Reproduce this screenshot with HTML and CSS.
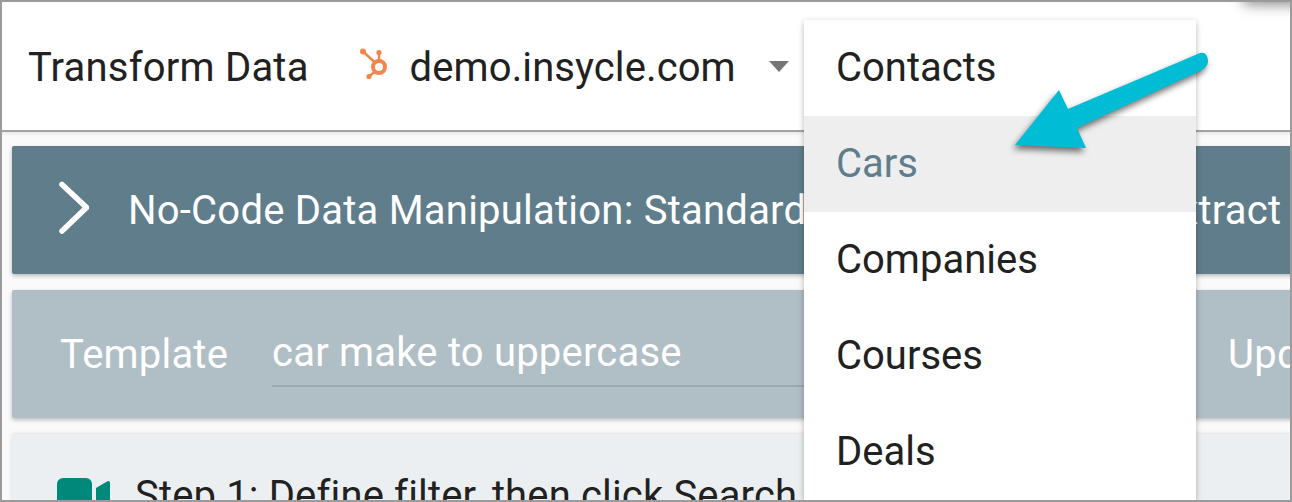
FILE: index.html
```html
<!DOCTYPE html>
<html lang="en">
<head>
<meta charset="utf-8">
<title>Transform Data</title>
<link rel="stylesheet" href="styles.css">
</head>
<body>
<div class="frame">
  <span class="corner-shadow"></span>
  <header class="topbar">
    <h1 class="title">Transform Data</h1>
    <svg class="hubspot" width="34" height="40" viewBox="0 0 34 40" aria-hidden="true">
      <g fill="none" stroke="#f5844a">
        <circle cx="20" cy="22" r="6" stroke-width="4"/>
        <path d="M4 6.5 16 17.5M20 8V15M10.5 31 16 26.5" stroke-width="2.4"/>
      </g>
      <g fill="#f5844a">
        <circle cx="4" cy="6.5" r="3"/>
        <circle cx="20" cy="7.5" r="2.6"/>
        <circle cx="10" cy="31.5" r="2.6"/>
      </g>
    </svg>
    <span class="account">demo.insycle.com</span>
    <span class="caret"></span>
  </header>
  <main class="content">
    <section class="panel panel-title">
      <svg class="chevron" width="30" height="56" viewBox="0 0 30 56" aria-hidden="true">
        <path d="M3 4.5 27.5 27.5 3 51" fill="none" stroke="#fff" stroke-width="5.5" stroke-linecap="round"/>
      </svg>
      <span class="panel-text">No-Code Data Manipulation: Standardize, Format, Match, Extract</span>
    </section>
    <section class="panel panel-template">
      <span class="template-label">Template</span>
      <span class="template-input">car make to uppercase</span>
      <span class="template-action">Update</span>
    </section>
    <section class="panel panel-step">
      <svg class="video" width="54" height="40" viewBox="0 0 54 40" aria-hidden="true">
        <rect x="0" y="0" width="35" height="40" rx="6" fill="#00897b"/>
        <path d="M39 10 50 3.5Q53 2 53 5V40H39Z" fill="#00897b"/>
      </svg>
      <span class="step-text">Step 1: Define filter, then click Search</span>
    </section>
  </main>
  <ul class="menu">
    <li class="menu-item">Contacts</li>
    <li class="menu-item menu-item-active">Cars</li>
    <li class="menu-item">Companies</li>
    <li class="menu-item">Courses</li>
    <li class="menu-item">Deals</li>
  </ul>
  <svg class="arrow" width="220" height="120" viewBox="1005 40 220 120" aria-hidden="true">
    <path d="M1199 53.5C1204 51 1208 55 1208 61 1208 66 1204 69 1200 71L1077 128 1086 148 1015 145 1059 90 1068 109Z" fill="#00bcd4"/>
  </svg>
</div>
</body>
</html>
```
FILE: styles.css
```css
* { box-sizing: border-box; }
html, body { margin: 0; padding: 0; }
body { font-family: Roboto, "Liberation Sans", sans-serif; background: #fff; }

.frame {
  position: relative;
  width: 1292px;
  height: 502px;
  border: 2px solid #9b9b9b;
  background: #fafafa;
  overflow: hidden;
}
.corner-shadow {
  position: absolute;
  top: -14px;
  right: -20px;
  width: 68px;
  height: 14px;
  border-radius: 10px;
  box-shadow: 0 2px 14px rgba(0, 0, 0, .5);
}
.topbar {
  display: flex;
  align-items: center;
  height: 130px;
  padding: 0 0 0 26px;
  background: #fff;
  border-bottom: 2px solid #a3a3a3;
  box-shadow: 0 2px 4px rgba(0, 0, 0, .08);
}
.title {
  margin: 2px 0 0;
  font-size: 40px;
  font-weight: 400;
  color: #212121;
  letter-spacing: .2px;
}
.hubspot { margin-left: 50px; margin-top: -3px; }
.account {
  margin: 2px 0 0 17px;
  font-size: 40px;
  color: #212121;
  letter-spacing: .1px;
}
.caret {
  width: 0;
  height: 0;
  margin-left: 33px;
  border-left: 10.5px solid transparent;
  border-right: 10.5px solid transparent;
  border-top: 11px solid #757575;
}
.content {
  display: flex;
  flex-direction: column;
  gap: 16px;
  padding: 14px 0 0 10px;
}
.panel {
  display: flex;
  align-items: center;
  flex: none;
  height: 128px;
  margin-right: -10px;
  border-radius: 2px;
  white-space: nowrap;
  overflow: hidden;
  box-shadow: 0 2px 4px rgba(0, 0, 0, .25);
}
.panel-title { background: #607d8b; color: #fff; padding-left: 47px; }
.chevron { flex: none; margin-top: -4px; }
.panel-text { margin-left: 39px; font-size: 40px; letter-spacing: .23px; }
.panel-template { background: #b0bec5; color: #fff; padding-left: 48px; }
.template-label { font-size: 40px; letter-spacing: .2px; }
.template-input {
  flex: none;
  width: 600px;
  margin: 7px 0 0 44px;
  padding-bottom: 9px;
  font-size: 40px;
  letter-spacing: .2px;
  border-bottom: 2px solid #9aa8af;
}
.template-action { margin-left: 356px; font-size: 40px; letter-spacing: .2px; }
.panel-step {
  align-items: flex-start;
  background: #eceff1;
  color: #212121;
  padding: 44px 0 0 45px;
  box-shadow: 0 0 4px rgba(0, 0, 0, .15);
}
.video { flex: none; }
.step-text { margin: -2px 0 0 24px; font-size: 40px; letter-spacing: .15px; line-height: 40px; }

.menu {
  position: absolute;
  top: 18px;
  left: 802px;
  width: 392px;
  margin: 0;
  padding: 0;
  list-style: none;
  background: #fff;
  box-shadow: 0 2px 6px rgba(0, 0, 0, .28);
}
.menu-item {
  height: 96px;
  padding-left: 32px;
  font-size: 40px;
  line-height: 96px;
  color: #212121;
}
.menu-item-active { background: #eeeeee; color: #607d8b; }
.arrow {
  position: absolute;
  top: 38px;
  left: 1003px;
  filter: drop-shadow(-2px 4px 3px rgba(0, 0, 0, .55));
}
```
